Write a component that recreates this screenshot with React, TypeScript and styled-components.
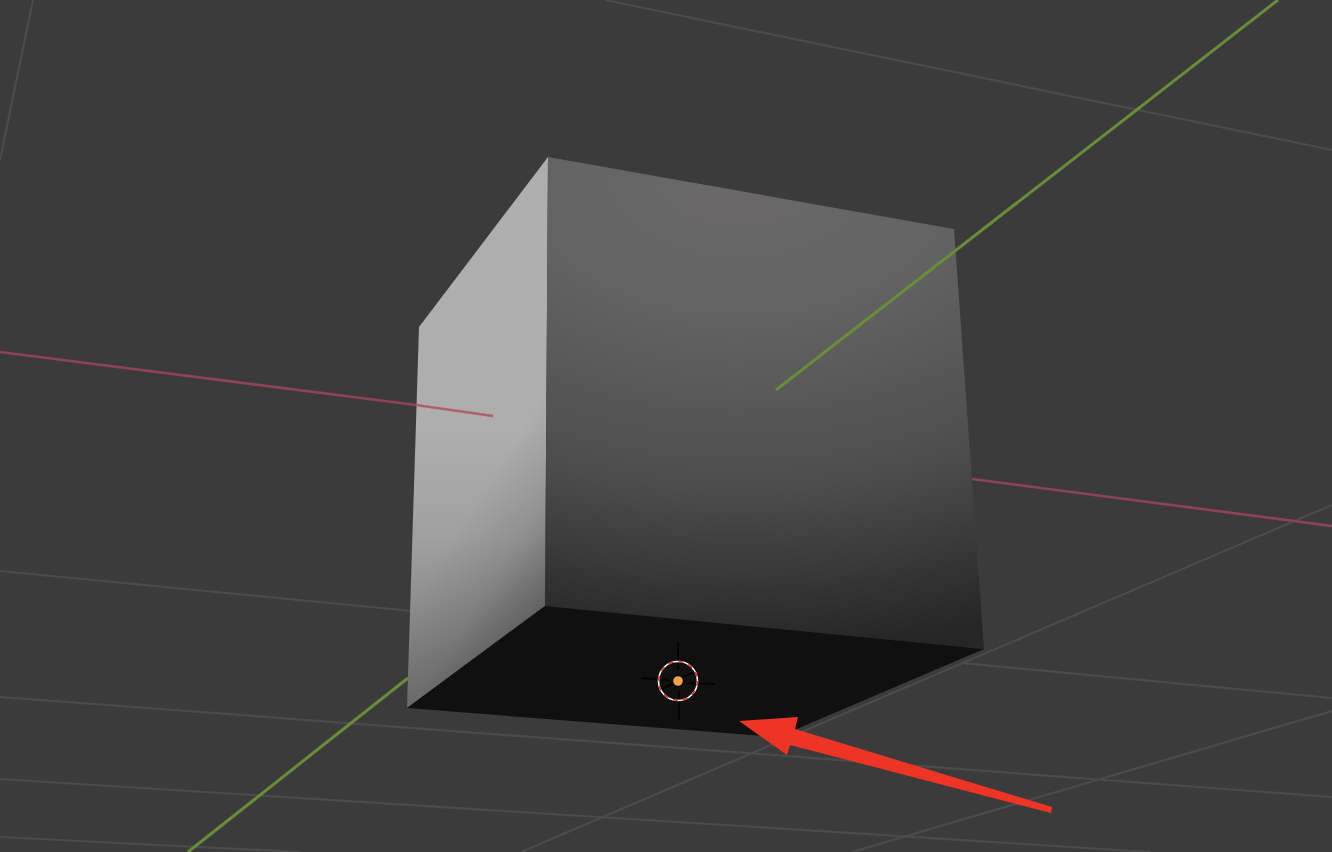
import React from "react";
import styled, { createGlobalStyle } from "styled-components";

const GlobalStyle = createGlobalStyle`
    html, body, #root {
        margin: 0;
        width: 100%;
        height: 100%;
        background: #3b3b3b;
        overflow: hidden;
    }
`;

const Viewport = styled.main`
    display: flex;
    width: 100vw;
    height: 100vh;
    background: #3b3b3b;
`;

const Scene = styled.svg`
    display: block;
    width: 100%;
    height: 100%;
`;

const GridLine = styled.line`
    stroke: #4b4b4b;
    stroke-width: 2.2;
`;

const AxisLine = styled.line<{ $axis: "x" | "y"; $lit?: boolean }>`
    stroke: ${({ $axis, $lit }) =>
        $axis === "y" ? "#6a8c38" : $lit ? "#b0606c" : "#8f4455"};
    stroke-width: ${({ $axis }) => ($axis === "y" ? 3 : 2.6)};
`;

const CursorTick = styled.line`
    stroke: #030303;
    stroke-width: 2;
`;

type Segment = [number, number, number, number];

const gridLines: Segment[] = [
    [33, 0, 0, 160],
    [605, 0, 1332, 150],
    [0, 571, 412, 611],
    [0, 697, 1332, 797],
    [0, 779, 1150, 852],
    [0, 837, 300, 852],
    [962, 663, 1332, 698],
    [1332, 505, 521, 852],
    [1332, 711, 852, 852],
];

const cursorTicks: Segment[] = [
    [678, 642, 678, 670],
    [679, 691, 679, 720],
    [641, 678, 669, 680],
    [688, 683, 715, 684],
    [695, 672, 683, 677],
    [662, 689, 674, 683],
];

const seg = ([x1, y1, x2, y2]: Segment) => ({ x1, y1, x2, y2 });

const LEFT_FACE = "548,157 419,327 407,708 545,606";

function Cube() {
    return (
        <>
            <polygon points={LEFT_FACE} fill="url(#leftFace)" />
            <polygon points={LEFT_FACE} fill="url(#leftShade)" />
            <polygon points="548,157 954,229 984,649 545,606" fill="url(#frontFace)" />
            <polygon points="545,606 984,649 778,737 407,708" fill="#101010" />
        </>
    );
}

function Cursor3D() {
    return (
        <g>
            {cursorTicks.map((tick) => (
                <CursorTick key={tick.join()} {...seg(tick)} />
            ))}
            <circle cx="678" cy="681" r="19.5" fill="none" stroke="#ffffff" strokeWidth="1.6" />
            <circle
                cx="678"
                cy="681"
                r="19.5"
                fill="none"
                stroke="#e8352c"
                strokeWidth="1.6"
                strokeDasharray="5 5.2"
            />
            <circle cx="678" cy="681" r="6.5" fill="#080808" />
            <circle cx="678" cy="681" r="4.8" fill="#f4a142" />
        </g>
    );
}

export default function App() {
    return (
        <Viewport>
            <GlobalStyle />
            <Scene viewBox="0 0 1332 852" preserveAspectRatio="none">
                <defs>
                    <linearGradient id="leftFace" gradientUnits="userSpaceOnUse" x1="0" y1="430" x2="0" y2="700">
                        <stop offset="0" stopColor="#afaeae" />
                        <stop offset="0.4" stopColor="#a0a0a0" />
                        <stop offset="0.68" stopColor="#8c8c8c" />
                        <stop offset="1" stopColor="#767676" />
                    </linearGradient>
                    <linearGradient id="leftShade" gradientUnits="userSpaceOnUse" x1="440" y1="530" x2="550" y2="600">
                        <stop offset="0.1" stopColor="#000000" stopOpacity="0" />
                        <stop offset="0.55" stopColor="#000000" stopOpacity="0.1" />
                        <stop offset="1" stopColor="#000000" stopOpacity="0.32" />
                    </linearGradient>
                    <radialGradient
                        id="frontFace"
                        gradientUnits="userSpaceOnUse"
                        cx="740"
                        cy="170"
                        r="480"
                        gradientTransform="translate(740 170) scale(1.5 1) translate(-740 -170)"
                    >
                        <stop offset="0" stopColor="#6b6969" />
                        <stop offset="0.3" stopColor="#646363" />
                        <stop offset="0.5" stopColor="#585757" />
                        <stop offset="0.66" stopColor="#4d4d4d" />
                        <stop offset="0.82" stopColor="#3b3b3b" />
                        <stop offset="1" stopColor="#262626" />
                    </radialGradient>
                </defs>

                {gridLines.map((line) => (
                    <GridLine key={line.join()} {...seg(line)} />
                ))}
                <AxisLine $axis="x" x1="0" y1="352" x2="416" y2="405" />
                <AxisLine $axis="x" x1="972" y1="479" x2="1332" y2="526" />
                <AxisLine $axis="y" x1="408" y1="678" x2="188" y2="852" />

                <Cube />

                <AxisLine $axis="x" $lit x1="416" y1="405" x2="493" y2="416" />
                <AxisLine $axis="y" x1="776" y1="390" x2="1278" y2="0" />

                <Cursor3D />

                <polygon
                    points="739,721 798,717 795,729 1052,807 1051,813 790,745 787,755"
                    fill="#ee3424"
                />
            </Scene>
        </Viewport>
    );
}
